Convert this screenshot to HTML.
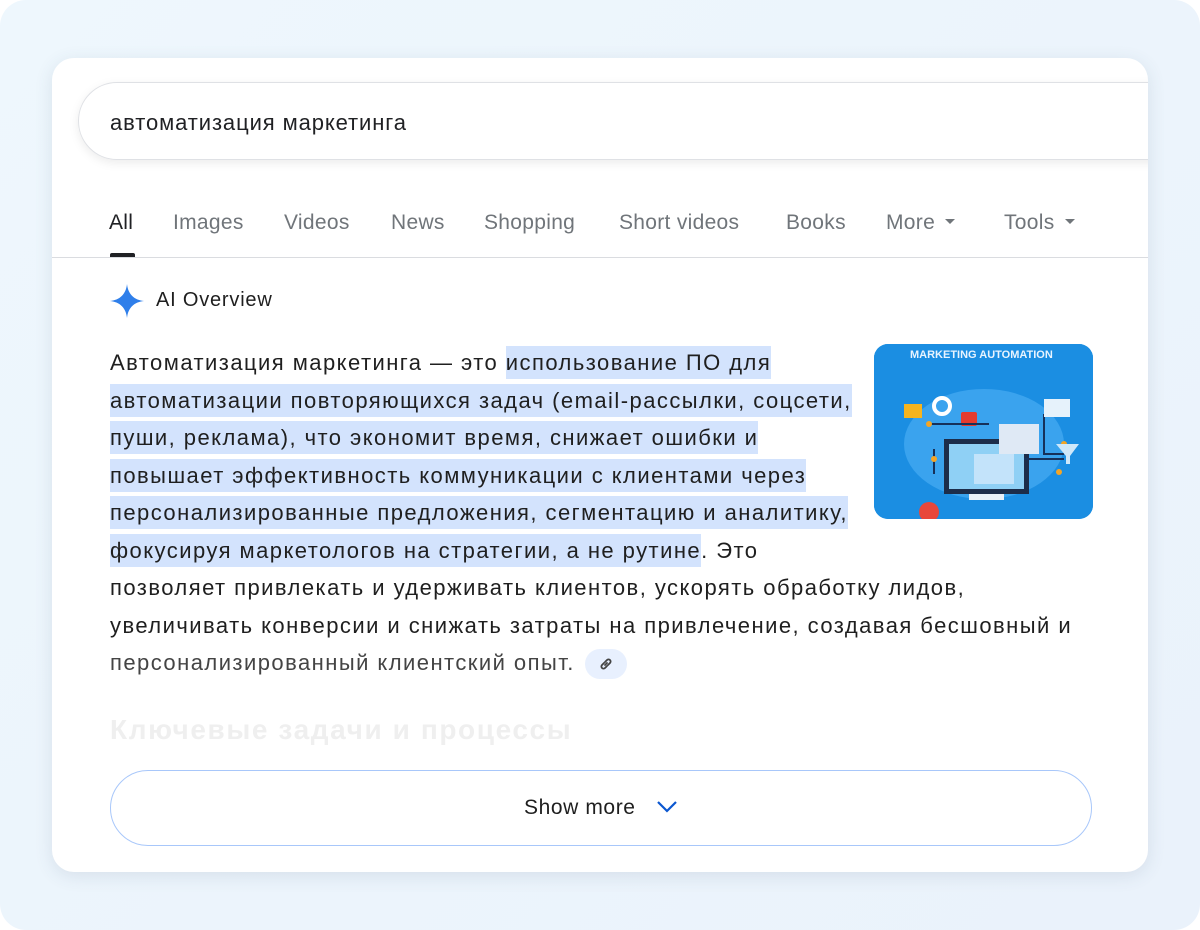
<!DOCTYPE html>
<html><head><meta charset="utf-8"><style>
html,body{margin:0;padding:0;background:#fff;}
body{width:1200px;height:930px;position:relative;overflow:hidden;font-family:"Liberation Sans","DejaVu Sans",sans-serif;}
.bg{position:absolute;left:0;top:0;width:1200px;height:930px;border-radius:26px;background:linear-gradient(135deg,#eef7fd,#eaf2fb);}
.card{position:absolute;left:52px;top:58px;width:1096px;height:814px;background:#fff;border-radius:22px;box-shadow:0 4px 18px rgba(60,80,110,.12);overflow:hidden;}
.search{position:absolute;left:26px;top:24px;width:1120px;height:78px;border:1px solid #dfe1e5;border-radius:40px;box-shadow:0 3px 10px rgba(0,0,0,.08);box-sizing:border-box;}
.search span{position:absolute;left:31px;top:27px;font-size:22px;letter-spacing:0.9px;color:#202124;}
.tabs{position:absolute;left:0;top:0;width:1096px;height:199px;border-bottom:1px solid #dadce0;}
.tab{position:absolute;top:153px;font-size:21px;letter-spacing:0.3px;color:#70757a;}
.tab.on{color:#202124;}
.ul{position:absolute;left:58px;top:195px;width:25px;height:4px;background:#202124;border-radius:2px 2px 0 0;}
.caret{display:inline-block;width:0;height:0;border-left:5px solid transparent;border-right:5px solid transparent;border-top:5px solid #70757a;vertical-align:middle;margin-left:10px;margin-top:-3px;}
.ai{position:absolute;left:104px;top:231px;font-size:20px;letter-spacing:0.8px;color:#1f1f1f;}
.txt{position:absolute;left:58px;top:286px;font-size:22px;letter-spacing:1.45px;line-height:37.5px;color:#1f1f1f;white-space:nowrap;}
.hl{background:#d3e3fd;padding:4px 0;}
.img{position:absolute;left:822px;top:286px;width:219px;height:175px;border-radius:14px;background:#1a8fe0;overflow:hidden;}
.link{display:inline-block;width:42px;height:30px;border-radius:15px;background:#e8f0fe;vertical-align:middle;margin-left:10px;position:relative;}
.fade{position:absolute;left:58px;top:656px;font-size:28px;letter-spacing:1.6px;font-weight:bold;color:#efefef;}
.btn{position:absolute;left:58px;top:712px;width:982px;height:76px;border:1px solid #a8c7fa;border-radius:38px;box-sizing:border-box;text-align:center;font-size:21px;letter-spacing:0.6px;color:#1f1f1f;line-height:74px;}
</style></head><body>
<div class="bg"></div>
<div class="card">
 <div class="search"><span>автоматизация маркетинга</span></div>
 <div class="tabs">
  <span class="tab on" style="left:57px">All</span>
  <span class="tab" style="left:121px">Images</span>
  <span class="tab" style="left:232px">Videos</span>
  <span class="tab" style="left:339px">News</span>
  <span class="tab" style="left:432px">Shopping</span>
  <span class="tab" style="left:567px">Short videos</span>
  <span class="tab" style="left:734px">Books</span>
  <span class="tab" style="left:834px">More<i class="caret"></i></span>
  <span class="tab" style="left:952px">Tools<i class="caret"></i></span>
  <div class="ul"></div>
 </div>
 <svg style="position:absolute;left:57px;top:225px" width="36" height="36" viewBox="0 0 36 36"><path d="M18 1 C19 11 25 17 35 18 C25 19 19 25 18 35 C17 25 11 19 1 18 C11 17 17 11 18 1Z" fill="#2f7fea"/></svg>
 <div class="ai">AI Overview</div>
 <div class="txt">Автоматизация маркетинга — это <span class="hl">использование ПО для</span><br><span class="hl">автоматизации повторяющихся задач (email-рассылки, соцсети,</span><br><span class="hl">пуши, реклама), что экономит время, снижает ошибки и</span><br><span class="hl">повышает эффективность коммуникации с клиентами через</span><br><span class="hl">персонализированные предложения, сегментацию и аналитику,</span><br><span class="hl">фокусируя маркетологов на стратегии, а не рутине</span>. Это<br>позволяет привлекать и удерживать клиентов, ускорять обработку лидов,<br>увеличивать конверсии и снижать затраты на привлечение, создавая бесшовный и<br><span style="color:#444">персонализированный клиентский опыт.</span><span class="link"><svg style="position:absolute;left:13px;top:7px" width="16" height="16" viewBox="0 0 16 16"><g fill="none" stroke="#444" stroke-width="1.8" stroke-linecap="round"><path d="M7 9 L9 7"/><path d="M6 7 L4 9 a2.1 2.1 0 0 0 3 3 L9 10"/><path d="M10 9 L12 7 a2.1 2.1 0 0 0 -3 -3 L7 6"/></g></svg></span></div>
 <div class="img">
  <svg width="219" height="175" viewBox="0 0 219 175">
   <rect width="219" height="175" fill="#1b8ee2"/>
   <ellipse cx="110" cy="100" rx="80" ry="55" fill="#3aa3ee"/>
   <text x="36" y="14" font-family="Liberation Sans" font-weight="bold" font-size="11" fill="#e8f4ff">MARKETING AUTOMATION</text>
   <rect x="70" y="95" width="85" height="55" fill="#1c2d4a"/>
   <rect x="75" y="100" width="75" height="45" fill="#8fd0f5"/>
   <rect x="95" y="150" width="35" height="6" fill="#e8f0f8"/>
   <rect x="125" y="80" width="40" height="30" fill="#dfe9f5"/>
   <rect x="100" y="110" width="40" height="30" fill="#c3e3fa"/>
   <rect x="30" y="60" width="18" height="14" fill="#f6b41e"/>
   <rect x="87" y="68" width="16" height="14" rx="2" fill="#e53b2f"/>
   <circle cx="55" cy="168" r="10" fill="#e8473b"/>
   <circle cx="68" cy="62" r="8" fill="none" stroke="#fff" stroke-width="4"/>
   <path d="M55 80 H115 M60 105 V130 M170 70 V110 H190 M150 115 H190" stroke="#16315a" stroke-width="2" fill="none"/>
   <circle cx="55" cy="80" r="3" fill="#f5a524"/><circle cx="60" cy="115" r="3" fill="#f5a524"/><circle cx="185" cy="128" r="3" fill="#f5a524"/><circle cx="190" cy="100" r="3" fill="#f5a524"/>
   <path d="M182 100 L205 100 L196 112 V120 H192 V112Z" fill="#cfe8fa"/>
   <rect x="170" y="55" width="26" height="18" fill="#e6f2fb"/>
  </svg>
 </div>
 <div class="fade">Ключевые задачи и процессы</div>
 <div class="btn">Show more <svg style="vertical-align:middle;margin-left:14px;margin-top:-3px" width="22" height="14" viewBox="0 0 22 14"><path d="M2 2 L11 11 L20 2" fill="none" stroke="#0b57d0" stroke-width="2.2"/></svg></div>
</div>
</body></html>
